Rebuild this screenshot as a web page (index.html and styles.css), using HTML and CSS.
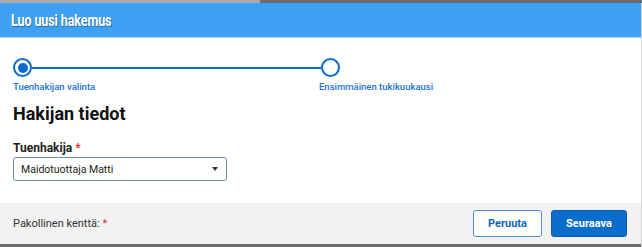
FILE: index.html
```html
<!DOCTYPE html>
<html lang="fi">
<head>
<meta charset="utf-8">
<link rel="stylesheet" href="styles.css">
</head>
<body>
<div class="topstrip"><div class="strip-left"></div><div class="strip-right"></div></div>
<div class="dialog">
  <header class="dlg-head"><h1>Luo uusi hakemus</h1></header>
  <main class="dlg-body">
    <div class="stepper">
      <div class="track">
        <span class="dot active"></span>
        <span class="line"></span>
        <span class="dot"></span>
      </div>
      <div class="labels">
        <span class="lbl lbl1">Tuenhakijan valinta</span>
        <span class="lbl">Ensimmäinen tukikuukausi</span>
      </div>
    </div>
    <h2 class="section">Hakijan tiedot</h2>
    <label class="field-label">Tuenhakija <span class="req">*</span></label>
    <div class="select"><span>Maidotuottaja Matti</span><span class="caret"></span></div>
  </main>
  <footer class="dlg-foot">
    <span class="note">Pakollinen kenttä: <span class="req">*</span></span>
    <div class="buttons">
      <button class="btn secondary">Peruuta</button>
      <button class="btn primary">Seuraava</button>
    </div>
  </footer>
</div>
</body>
</html>
```
FILE: styles.css
```css
* { box-sizing: border-box; }
html, body { margin: 0; padding: 0; }
body {
  width: 642px;
  height: 247px;
  overflow: hidden;
  background: #fff;
  font-family: Roboto, "Liberation Sans", Arial, sans-serif;
  color: #111;
}
.topstrip { display: flex; height: 3px; }
.strip-left { width: 260px; background: #a9a9a9; }
.strip-right { flex: 1; background: #6d6d6d; }
.dialog {
  display: flex;
  flex-direction: column;
  height: 244px;
  border-right: 1px solid #d4d4d4;
}
.dlg-head {
  height: 35px;
  background: #3fa1f4;
  border-bottom: 1px solid #a9d3f7;
  display: flex;
  align-items: center;
  padding-left: 11px;
}
.dlg-head h1 {
  margin: 0;
  font-size: 16px;
  font-weight: 700;
  color: #fff;
  letter-spacing: -0.1px;
  text-shadow: 1px 1px 1px rgba(0,0,0,0.35);
  padding-top: 1px;
  transform: scaleX(0.78);
  transform-origin: left center;
  white-space: nowrap;
}
.dlg-body {
  flex: 1;
  padding: 20px 13px 0 13px;
}
.stepper { width: 440px; }
.track {
  display: flex;
  align-items: center;
}
.dot {
  width: 19px;
  height: 19px;
  border: 2px solid #0b6ccd;
  border-radius: 50%;
  background: #fff;
  flex: none;
  display: flex;
  align-items: center;
  justify-content: center;
}
.dot.active::after {
  content: "";
  width: 10px;
  height: 10px;
  border-radius: 50%;
  background: #0b6ccd;
}
.line {
  width: 289px;
  height: 2px;
  background: #0b6ccd;
}
.labels {
  display: flex;
  margin-top: 4px;
  font-size: 9.5px;
  color: #1b74d1;
  font-weight: 500;
}
.lbl1 { width: 306px; }
.section {
  margin: 11px 0 0 0;
  font-size: 18px;
  font-weight: 700;
  color: #111;
}
.field-label {
  display: block;
  margin-top: 17px;
  font-size: 12px;
  font-weight: 700;
  color: #222;
}
.req { color: #d9343a; }
.select {
  margin-top: 2px;
  width: 214px;
  height: 24px;
  border: 1px solid #6e8fb8;
  border-radius: 3px;
  display: flex;
  align-items: center;
  justify-content: space-between;
  padding: 0 8px 0 7px;
  font-size: 10.5px;
  color: #222;
}
.caret {
  width: 0;
  height: 0;
  border-left: 3.5px solid transparent;
  border-right: 3.5px solid transparent;
  border-top: 4px solid #333;
}
.dlg-foot {
  height: 44px;
  background: #f2f2f2;
  border-bottom: 3px solid #6b6b6b;
  display: flex;
  align-items: center;
  justify-content: space-between;
  padding: 0 14px 0 13px;
}
.note { font-size: 11px; color: #333; }
.buttons { display: flex; gap: 9px; }
.btn {
  height: 27px;
  border-radius: 3px;
  font-family: Roboto, "Liberation Sans", Arial, sans-serif;
  font-size: 11px;
  font-weight: 700;
  padding: 0;
  cursor: pointer;
}
.secondary {
  width: 69px;
  background: #fff;
  border: 1px solid #4d90d9;
  color: #1265be;
}
.primary {
  width: 76px;
  background: #0b6dcb;
  border: 1px solid #0a5fb3;
  color: #fff;
}
```
